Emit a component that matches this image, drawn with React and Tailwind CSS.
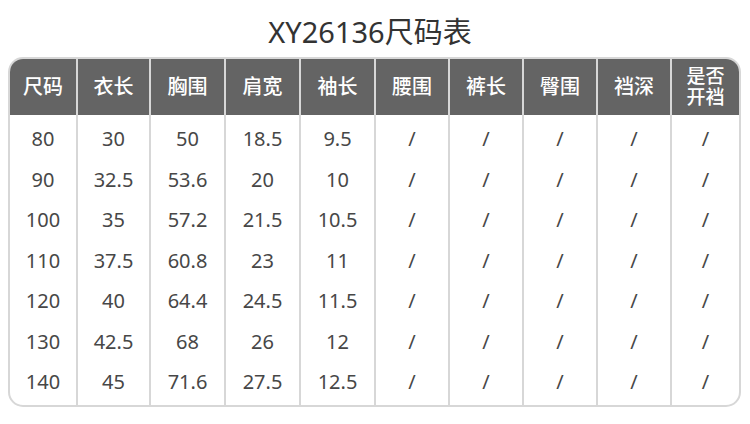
import React from "react";

const headers = ["尺码", "衣长", "胸围", "肩宽", "袖长", "腰围", "裤长", "臀围", "裆深", "是否\n开裆"];
const widths = ["w-[68px]", "w-[73px]", "w-[75px]", "w-[75px]", "w-[75px]", "w-[74px]", "w-[74px]", "w-[74px]", "w-[74px]", "flex-1"];
const data = [
  ["80", "90", "100", "110", "120", "130", "140"],
  ["30", "32.5", "35", "37.5", "40", "42.5", "45"],
  ["50", "53.6", "57.2", "60.8", "64.4", "68", "71.6"],
  ["18.5", "20", "21.5", "23", "24.5", "26", "27.5"],
  ["9.5", "10", "10.5", "11", "11.5", "12", "12.5"],
];

export default function App() {
  const font = { fontFamily: '"Noto Sans", "Noto Sans CJK SC", sans-serif' };
  return (
    <div className="w-[750px] h-[424px] bg-white flex flex-col" style={font}>
      <div className="h-[57px] pt-[5px] pr-[10px] flex items-center justify-center text-[29px] text-[#333333] leading-none">
        XY26136尺码表
      </div>
      <div className="ml-[8px] w-[733px] h-[350px] border-2 border-[#d7d7d7] rounded-[15px] overflow-hidden flex">
        {headers.map((h, i) => (
          <div
            key={i}
            className={`${widths[i]} flex flex-col ${i < 9 ? "border-r-2 border-[#d7d7d7]" : ""}`}
          >
            <div className="h-[56px] bg-[#646464] text-white flex items-center justify-center text-center whitespace-pre-line font-medium">
              {i === 9 ? (
                <span className="text-[19px] leading-[21px]">{h}</span>
              ) : (
                <span className="text-[20px] leading-none">{h}</span>
              )}
            </div>
            <div className="pt-[4px] flex flex-col">
              {Array.from({ length: 7 }).map((_, r) => (
                <div key={r} className="h-[40.5px] flex items-center justify-center text-[20px] text-[#474747]">
                  {i < 5 ? data[i][r] : "/"}
                </div>
              ))}
            </div>
          </div>
        ))}
      </div>
    </div>
  );
}
